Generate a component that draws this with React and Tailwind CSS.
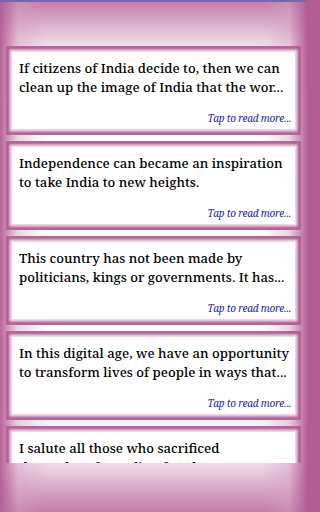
import React from "react";

const quotes = [
  ["If citizens of India decide to, then we can", "clean up the image of India that the wor..."],
  ["Independence can became an inspiration", "to take India to new heights."],
  ["This country has not been made by", "politicians, kings or governments. It has..."],
  ["In this digital age, we have an opportunity", "to transform lives of people in ways that..."],
  ["I salute all those who sacrificed", "themselves for India's freedom."],
];

const QuoteCard = ({ lines }) => {
  return (
    <div className="h-[89px] shrink-0 p-[6px] bg-[#cc8db6] shadow-[inset_0_0_0_1px_#b4679a,inset_0_0_3px_3px_#b05c93]">
      <div className="h-full flex flex-col bg-white shadow-[0_0_2px_2px_#f1dbe8] pl-[7px] pr-[4px] pt-[7px] pb-[5px]">
        <p className="font-['Noto_Serif','DejaVu_Serif',serif] font-medium text-[13.2px] leading-[19px] text-black whitespace-nowrap">
          {lines[0]}
          <br />
          {lines[1]}
        </p>
        <p className="mt-auto text-right font-['Noto_Serif','DejaVu_Serif',serif] italic text-[10px] leading-[12px] tracking-[-0.2px] text-[#2222a6]">
          Tap to read more...
        </p>
      </div>
    </div>
  );
};

export default function App() {
  return (
    <div className="h-[512px] w-full bg-[#b35d95] overflow-hidden">
      <div className="h-[512px] w-[307px] flex flex-col overflow-hidden bg-[linear-gradient(to_right,rgba(178,92,148,0.95),rgba(214,160,194,0.45)_18px,rgba(255,255,255,0)_45px,rgba(255,255,255,0)_calc(100%_-_45px),rgba(214,160,194,0.45)_calc(100%_-_18px),rgba(178,92,148,0.95)),linear-gradient(to_bottom,#c07aa7,#f1dfe9_46px,#ffffff_110px,#ffffff_calc(100%_-_110px),#efdbe7_calc(100%_-_49px),#c27ba9)]">
        {/* top strip */}
        <div className="h-[2px] shrink-0 bg-[#7766b1]" />
        <div className="h-[44px] shrink-0" />

        {/* quote list */}
        <div className="h-[417px] shrink-0 overflow-hidden px-[6px] flex flex-col gap-[6px]">
          {quotes.map((q, i) => (
            <QuoteCard key={i} lines={q} />
          ))}
        </div>
      </div>
    </div>
  );
}
